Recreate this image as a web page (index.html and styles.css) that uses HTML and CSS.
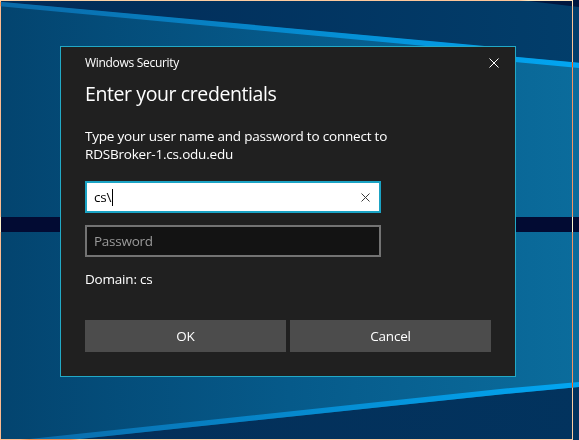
FILE: index.html
```html
<!DOCTYPE html>
<html lang="en">
<head>
<meta charset="utf-8">
<title>Windows Security</title>
<link rel="stylesheet" href="styles.css">
</head>
<body>
<div class="desktop">
  <svg class="wallpaper" viewBox="0 0 579 440" width="579" height="440" aria-hidden="true">
    <defs>
      <linearGradient id="pane" x1="0" y1="0" x2="1" y2="0">
        <stop offset="0" stop-color="#03446f"/>
        <stop offset="0.5" stop-color="#065a8a"/>
        <stop offset="1" stop-color="#0b6c9c"/>
      </linearGradient>
      <linearGradient id="sky" x1="0" y1="0" x2="1" y2="0">
        <stop offset="0" stop-color="#022a56"/>
        <stop offset="1" stop-color="#023e6b"/>
      </linearGradient>
      <linearGradient id="beam" x1="0" y1="0" x2="1" y2="0">
        <stop offset="0" stop-color="#0a6aa8"/>
        <stop offset="0.6" stop-color="#0590d6"/>
        <stop offset="1" stop-color="#02a6f2"/>
      </linearGradient>
      <linearGradient id="floor" x1="0" y1="0" x2="1" y2="0">
        <stop offset="0" stop-color="#042f59"/>
        <stop offset="1" stop-color="#02335e"/>
      </linearGradient>
    </defs>
    <!-- window pane -->
    <rect width="579" height="440" fill="url(#pane)"/>
    <!-- area above the upper light beam -->
    <polygon points="0,0 579,0 579,63 515,57 490,47 0,2" fill="url(#sky)"/>
    <polygon points="520,0 579,0 579,7" fill="#01173f"/>
    <!-- upper light beam -->
    <polygon points="0,1.7 490,46.5 515,56.7 579,62.7 579,68 515,62 490,52 0,6.2" fill="url(#beam)"/>
    <!-- horizontal mullion -->
    <rect x="0" y="217" width="579" height="15" fill="#020b33"/>
    <!-- area below the lower light beam -->
    <polygon points="70,440 500,394.5 579,387 579,440" fill="url(#floor)"/>
    <!-- lower light beam -->
    <polygon points="20,440 500,389 579,382 579,387 500,394.5 70,440" fill="url(#beam)"/>
  </svg>

  <div class="dialog" role="dialog" aria-labelledby="dlg-title">
    <div class="dialog-header">
      <span class="dialog-caption">Windows Security</span>
      <svg class="close" viewBox="0 0 10 10" width="10" height="10" aria-label="Close">
        <path d="M0.5 0.5 L9.5 9.5 M9.5 0.5 L0.5 9.5" stroke="#ffffff" stroke-width="1" fill="none"/>
      </svg>
    </div>
    <h1 class="dialog-title" id="dlg-title">Enter your credentials</h1>
    <p class="dialog-text">Type your user name and password to connect to<br>RDSBroker-1.cs.odu.edu</p>

    <div class="field field-focused">
      <span class="field-value">cs\</span><span class="caret"></span>
      <svg class="clear" viewBox="0 0 9 9" width="9" height="9" aria-label="Clear">
        <path d="M0.5 0.5 L8.5 8.5 M8.5 0.5 L0.5 8.5" stroke="#3a3a3a" stroke-width="1" fill="none"/>
      </svg>
    </div>
    <div class="field field-password">
      <span class="placeholder">Password</span>
    </div>

    <p class="domain">Domain: cs</p>

    <div class="actions">
      <button class="btn" type="button">OK</button>
      <button class="btn" type="button">Cancel</button>
    </div>
  </div>

  <div class="frame"></div>
</div>
</body>
</html>
```
FILE: styles.css
```css
* {
  box-sizing: border-box;
}

html,
body {
  margin: 0;
  padding: 0;
}

body {
  width: 579px;
  height: 440px;
  overflow: hidden;
  background: #03446f;
  font-family: "Open Sans", "Noto Sans", sans-serif;
}

.desktop {
  position: relative;
  width: 579px;
  height: 440px;
  padding: 46px 0 0 60px;
}

.wallpaper {
  position: absolute;
  left: 0;
  top: 0;
  display: block;
}

/* thin inverted selection rectangle drawn over the desktop */
.frame {
  position: absolute;
  left: 0;
  top: 0;
  width: 573px;
  height: 440px;
  border: 1px solid #ffffff;
  mix-blend-mode: difference;
  pointer-events: none;
}

.dialog {
  position: relative;
  width: 456px;
  background: #202020;
  border: 1px solid #22a9c6;
  color: #ffffff;
  padding: 8px 24px 24px;
}

.dialog-header {
  display: flex;
  align-items: center;
  justify-content: space-between;
  height: 16px;
  margin-right: -8px;
}

.dialog-caption {
  font-size: 12px;
  line-height: 16px;
  letter-spacing: -0.3px;
}

.close {
  display: block;
}

.dialog-title {
  margin: 9px 0 0;
  font-size: 19.5px;
  line-height: 28px;
  font-weight: 400;
  letter-spacing: -0.4px;
}

.dialog-text {
  margin: 20px 0 0;
  font-size: 13.5px;
  line-height: 17.5px;
  letter-spacing: -0.2px;
}

.field {
  display: flex;
  align-items: center;
  width: 296px;
  height: 32px;
  margin-top: 18px;
  padding: 0 9px 0 7px;
  font-size: 13.5px;
  line-height: 18px;
  letter-spacing: -0.25px;
}

.field-focused {
  background: #ffffff;
  border: 2px solid #1ba3c4;
  color: #000000;
}

.field-value {
  white-space: pre;
}

.caret {
  width: 1px;
  height: 17px;
  margin-left: 1px;
  background: #000000;
}

.clear {
  display: block;
  margin-left: auto;
}

.field-password {
  margin-top: 12px;
  background: #131313;
  border: 2px solid #737373;
}

.placeholder {
  color: #9a9a9a;
}

.domain {
  margin: 13px 0 0;
  font-size: 13.5px;
  line-height: 18px;
  letter-spacing: -0.2px;
}

.actions {
  display: grid;
  grid-template-columns: 1fr 1fr;
  gap: 4px;
  margin-top: 32px;
}

.btn {
  height: 32px;
  border: 0;
  padding: 0;
  background: #4c4c4c;
  color: #ffffff;
  font-family: inherit;
  font-size: 13.5px;
  line-height: 18px;
  letter-spacing: -0.2px;
}
```
